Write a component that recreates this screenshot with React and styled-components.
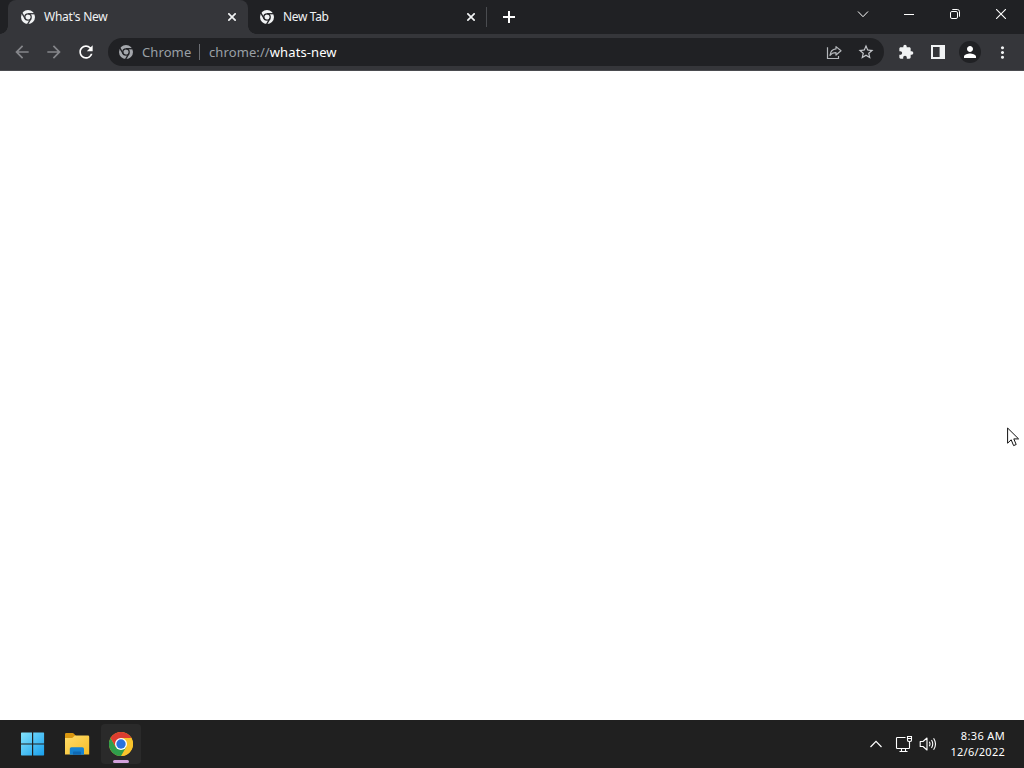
import styled, { createGlobalStyle } from "styled-components";
import {
	MdArrowBack,
	MdArrowForward,
	MdRefresh,
	MdStarBorder,
	MdExtension,
	MdPerson,
	MdMoreVert,
} from "react-icons/md";

const COLORS = {
	frame: "#202124",
	toolbar: "#35363a",
	omnibox: "#202124",
	taskbar: "#202020",
	text: "#f1f3f4",
	muted: "#9aa0a6",
	disabled: "#85868a",
	white: "#ffffff",
};

const tabs = [
	{ title: "What's New", active: true, spacing: "-0.28px" },
	{ title: "New Tab", active: false, spacing: "-0.35px" },
];

const ChromeMono = ({ color, gap }) => (
	<svg width="14" height="14" viewBox="0 0 28 28">
		<circle cx="14" cy="14" r="14" fill={color} />
		<circle cx="14" cy="14" r="6.4" fill={color} stroke={gap} strokeWidth="2.6" />
		{[0, 120, 240].map((deg) => (
			<path
				key={deg}
				d="M14 7.4H28"
				stroke={gap}
				strokeWidth="2.6"
				transform={`rotate(${deg} 14 14)`}
			/>
		))}
	</svg>
);

const ChromeLogo = () => (
	<svg width="24" height="24" viewBox="0 0 48 48">
		<circle cx="24" cy="24" r="24" fill="#fbc116" />
		<path d="M24 48A24 24 0 0 0 44.8 12H24L34.4 30z" fill="#f9c42c" />
		<path d="M3.2 12A24 24 0 0 0 24 48L34.4 30L24 24L13.6 30z" fill="#2f9e4c" />
		<path d="M3.2 12L13.6 30L24 24V12L44.8 12A24 24 0 0 0 3.2 12z" fill="#dc3d30" />
		<circle cx="24" cy="24" r="12" fill="#fff" />
		<circle cx="24" cy="24" r="9.4" fill="#2a72dc" />
	</svg>
);

const CloseIcon = () => (
	<svg width="8" height="8" viewBox="0 0 8 8">
		<path d="M0.3 0.3L7.7 7.7M7.7 0.3L0.3 7.7" stroke="#f1f3f4" strokeWidth="1.7" />
	</svg>
);

const ShareIcon = () => (
	<svg width="16" height="16" viewBox="0 0 16 16" fill="none" stroke="#b4b7bb" strokeWidth="1.2">
		<path d="M1.5 3.2V14.5H12.5V12" />
		<path
			d="M10 2.6L15 6.8L10 11V8.7C7.2 8.7 5.4 9.4 4 11.4C4.4 7.6 6.6 5.3 10 4.9z"
			strokeLinejoin="round"
		/>
	</svg>
);

const WindowsLogo = () => (
	<svg width="24" height="24" viewBox="0 0 24 24">
		<defs>
			<linearGradient id="win" x1="0" y1="0" x2="24" y2="24" gradientUnits="userSpaceOnUse">
				<stop offset="0" stopColor="#84e3fc" />
				<stop offset="1" stopColor="#159dec" />
			</linearGradient>
		</defs>
		<path
			d="M.5 .5H11V11.4H0V1zM12.2 .5H22.6L23.1 1V11.4H12.2zM0 12.6H11V23.5H.5L0 23zM12.2 12.6H23.1V23L22.6 23.5H12.2z"
			fill="url(#win)"
		/>
	</svg>
);

const FolderIcon = () => (
	<svg width="26" height="24" viewBox="0 0 26 24">
		<defs>
			<linearGradient id="folder" x1="0" y1="0" x2="1" y2="1">
				<stop offset="0" stopColor="#ffdc6a" />
				<stop offset="1" stopColor="#f6bd27" />
			</linearGradient>
		</defs>
		<path d="M1 2.2Q1 1 2.2 1H8.6Q9.4 1 10 1.7L12 4V9H1z" fill="#d9960f" />
		<path d="M1 6H8.2L11 3.6H24Q25.2 3.6 25.2 4.8V22.6H1z" fill="url(#folder)" />
		<path d="M5.8 22.8V16.8Q5.8 15.2 7.4 15.2H18.4Q20 15.2 20 16.8V22.8z" fill="#1683d1" />
		<path d="M9 22.8V20.2Q9 19.4 9.8 19.4H16.2Q17 19.4 17 20.2V22.8z" fill="#0f69b4" />
	</svg>
);

const NetworkIcon = () => (
	<svg width="18" height="18" viewBox="0 0 18 18" fill="none" stroke="#fff" strokeWidth="1.1">
		<path d="M10.5 2.5H2.3Q1.5 2.5 1.5 3.3V12.7Q1.5 13.5 2.3 13.5H13.7Q14.5 13.5 14.5 12.7V8" />
		<path d="M6.5 13.5V16.5M10.5 13.5V16.5M4.5 16.5H12.5" />
		<path d="M12.5 1.5H16.5V5.2Q16.5 6.5 14.5 6.5Q12.5 6.5 12.5 5.2zM12.5 3.5H16.5M14.5 6.5V9" />
	</svg>
);

const SpeakerIcon = () => (
	<svg width="18" height="16" viewBox="0 0 18 16" fill="none" stroke="#fff" strokeWidth="1.1">
		<path d="M1.2 5.5H4L8 2V14L4 10.5H1.2z" strokeLinejoin="round" />
		<path d="M10.3 5.8Q11.7 8 10.3 10.2M12.5 4Q15 8 12.5 12M14.6 2.2Q18.4 8 14.6 13.8" />
	</svg>
);

const Browser = () => (
	<>
		<TabStrip>
			{tabs.map(({ title, active, spacing }) => (
				<Tab key={title} $active={active}>
					<ChromeMono
						color={COLORS.text}
						gap={active ? COLORS.toolbar : COLORS.frame}
					/>
					<TabTitle $spacing={spacing}>{title}</TabTitle>
					<CloseIcon />
				</Tab>
			))}
			<TabDivider />
			<NewTab>
				<svg width="12" height="12" viewBox="0 0 12 12">
					<path d="M6 0V12M0 6H12" stroke="#fff" strokeWidth="2" />
				</svg>
			</NewTab>
			<WindowControls>
				<WindowButton>
					<svg width="12" height="12" viewBox="0 0 12 12">
						<path d="M1 3.5L6 8.7L11 3.5" fill="none" stroke="#fff" />
					</svg>
				</WindowButton>
				<WindowButton>
					<svg width="10" height="10" viewBox="0 0 10 10">
						<path d="M0 5.5H10" stroke="#fff" />
					</svg>
				</WindowButton>
				<WindowButton>
					<svg width="10" height="10" viewBox="0 0 10 10" fill="none" stroke="#fff">
						<rect x="0.5" y="2.5" width="7" height="7" rx="1.4" />
						<path d="M2.3 .5H7.3Q9.5 .5 9.5 2.7V7.7" />
					</svg>
				</WindowButton>
				<WindowButton>
					<svg width="10" height="10" viewBox="0 0 10 10">
						<path d="M0 0L10 10M10 0L0 10" stroke="#fff" strokeWidth="1.1" />
					</svg>
				</WindowButton>
			</WindowControls>
		</TabStrip>
		<Toolbar>
			<ToolButton $color={COLORS.disabled}>
				<MdArrowBack size={20} />
			</ToolButton>
			<ToolButton $color={COLORS.disabled}>
				<MdArrowForward size={20} />
			</ToolButton>
			<ToolButton $color={COLORS.white}>
				<MdRefresh size={20} />
			</ToolButton>
			<Omnibox>
				<ChromeMono color="#a4a7ac" gap={COLORS.omnibox} />
				<SiteLabel>Chrome</SiteLabel>
				<Separator />
				<Url>
					chrome://<UrlHost>whats-new</UrlHost>
				</Url>
				<ToolButton $color="#b4b7bb">
					<ShareIcon />
				</ToolButton>
				<ToolButton $color="#c4c7cb">
					<MdStarBorder size={18} />
				</ToolButton>
			</Omnibox>
			<ToolButton>
				<MdExtension size={16} />
			</ToolButton>
			<ToolButton>
				<svg width="14" height="14" viewBox="0 0 14 14">
					<path d="M0 0H14V14H0zM2 2V12H8.6V2z" fill="#f1f3f4" fillRule="evenodd" />
				</svg>
			</ToolButton>
			<ToolButton>
				<Avatar>
					<MdPerson size={18} />
				</Avatar>
			</ToolButton>
			<ToolButton>
				<MdMoreVert size={19} />
			</ToolButton>
		</Toolbar>
	</>
);

const Taskbar = () => (
	<TaskbarWrapper>
		<TaskButton>
			<WindowsLogo />
		</TaskButton>
		<TaskButton>
			<FolderIcon />
		</TaskButton>
		<TaskButton $active>
			<ChromeLogo />
			<Indicator />
		</TaskButton>
		<Tray>
			<svg width="12" height="8" viewBox="0 0 12 8">
				<path d="M.5 7L6 1.4L11.5 7" fill="none" stroke="#fff" strokeWidth="1.2" />
			</svg>
			<Status>
				<NetworkIcon />
				<SpeakerIcon />
			</Status>
			<Clock>
				<ClockLine $spacing="0.35px">8:36 AM</ClockLine>
				<ClockLine $spacing="0.25px">12/6/2022</ClockLine>
			</Clock>
		</Tray>
	</TaskbarWrapper>
);

const App = () => (
	<Desktop>
		<GlobalStyle />
		<Browser />
		<Page />
		<Taskbar />
		<Cursor width="13" height="20" viewBox="0 0 13 20">
			<path
				d="M.6 1V16.2L4.2 12.8L6.6 18.6L9.2 17.5L6.8 11.9H11.6z"
				fill="#fff"
				stroke="#111"
			/>
		</Cursor>
	</Desktop>
);

const GlobalStyle = createGlobalStyle`
	* {
		box-sizing: border-box;
	}
	body {
		margin: 0;
		overflow: hidden;
		font-family: "Noto Sans", "Open Sans", sans-serif;
	}
	svg {
		display: block;
		flex-shrink: 0;
	}
`;
const Desktop = styled.div`
	width: 1024px;
	height: 768px;
	display: flex;
	flex-direction: column;
	background: ${COLORS.white};
`;
const TabStrip = styled.div`
	height: 34px;
	display: flex;
	align-items: flex-start;
	padding-left: 8px;
	background: ${COLORS.frame};
`;
// the active tab flares out into the toolbar at both lower corners
const Tab = styled.div`
	position: relative;
	width: ${(props) => (props.$active ? "240px" : "238px")};
	height: 34px;
	display: flex;
	align-items: center;
	padding: 0 ${(props) => (props.$active ? "12px 0 13px" : "11px 0 12px")};
	border-radius: 8px 8px 0 0;
	background: ${(props) => (props.$active ? COLORS.toolbar : "transparent")};

	&::before,
	&::after {
		content: "";
		display: ${(props) => (props.$active ? "block" : "none")};
		position: absolute;
		bottom: 0;
		width: 8px;
		height: 8px;
	}
	&::before {
		left: -8px;
		background: radial-gradient(circle at 0 0, transparent 7.5px, ${COLORS.toolbar} 8px);
	}
	&::after {
		right: -8px;
		background: radial-gradient(circle at 100% 0, transparent 7.5px, ${COLORS.toolbar} 8px);
	}
`;
const TabTitle = styled.span`
	flex: 1;
	margin-left: 9px;
	color: ${COLORS.text};
	font-size: 12px;
	line-height: 16px;
	letter-spacing: ${(props) => props.$spacing};
	white-space: nowrap;
`;
const TabDivider = styled.div`
	width: 1px;
	height: 20px;
	margin-top: 7px;
	background: #4a4c50;
`;
const NewTab = styled.div`
	width: 28px;
	height: 34px;
	margin-left: 8px;
	display: flex;
	align-items: center;
	justify-content: center;
`;
const WindowControls = styled.div`
	display: flex;
	margin-left: auto;
`;
const WindowButton = styled.div`
	width: 46px;
	height: 28px;
	display: flex;
	align-items: center;
	justify-content: center;
`;
const Toolbar = styled.div`
	height: 37px;
	display: flex;
	align-items: center;
	padding: 0 6px;
	background: ${COLORS.toolbar};
	border-bottom: 1px solid #4a4b4f;
`;
const ToolButton = styled.div`
	width: 32px;
	height: 28px;
	display: flex;
	align-items: center;
	justify-content: center;
	color: ${(props) => props.$color || "#f1f3f4"};
`;
const Omnibox = styled.div`
	width: 776px;
	height: 28px;
	display: flex;
	align-items: center;
	margin: 0 6px;
	padding: 0 2px 0 11px;
	border-radius: 14px;
	background: ${COLORS.omnibox};
`;
const SiteLabel = styled.span`
	width: 50px;
	margin-left: 9px;
	color: ${COLORS.muted};
	font-size: 13px;
	line-height: 20px;
	letter-spacing: 0.1px;
`;
const Separator = styled.div`
	width: 1px;
	height: 16px;
	margin: 0 9px 0 7px;
	background: #6b6e73;
`;
const Url = styled.span`
	flex: 1;
	color: ${COLORS.muted};
	font-size: 13px;
	line-height: 20px;
	letter-spacing: 0.1px;
`;
const UrlHost = styled.span`
	color: ${COLORS.white};
`;
const Avatar = styled.div`
	width: 22px;
	height: 22px;
	display: flex;
	align-items: center;
	justify-content: center;
	border-radius: 50%;
	background: ${COLORS.frame};
	color: ${COLORS.white};
`;
const Page = styled.main`
	flex: 1;
	background: ${COLORS.white};
`;
const TaskbarWrapper = styled.footer`
	height: 48px;
	display: flex;
	align-items: center;
	gap: 4px;
	padding-left: 13px;
	background: ${COLORS.taskbar};
`;
const TaskButton = styled.div`
	position: relative;
	width: 40px;
	height: 40px;
	display: flex;
	align-items: center;
	justify-content: center;
	border-radius: 4px;
	background: ${(props) => (props.$active ? "#2a2a2a" : "transparent")};
`;
// running-app marker on the bottom edge of the button
const Indicator = styled.div`
	position: absolute;
	left: 12px;
	bottom: 1px;
	width: 16px;
	height: 3px;
	border-radius: 2px;
	background: #d3a1dc;
`;
const Tray = styled.div`
	display: flex;
	align-items: center;
	margin-left: auto;
	padding-right: 19px;
`;
const Status = styled.div`
	display: flex;
	align-items: center;
	gap: 6px;
	margin-left: 13px;
`;
const Clock = styled.div`
	width: 56px;
	margin-left: 12px;
	display: flex;
	flex-direction: column;
	align-items: flex-end;
`;
const ClockLine = styled.span`
	color: ${COLORS.white};
	font-size: 11px;
	line-height: 16px;
	letter-spacing: ${(props) => props.$spacing};
	white-space: nowrap;
`;
const Cursor = styled.svg`
	position: absolute;
	left: 1007px;
	top: 427px;
`;

export default App;
